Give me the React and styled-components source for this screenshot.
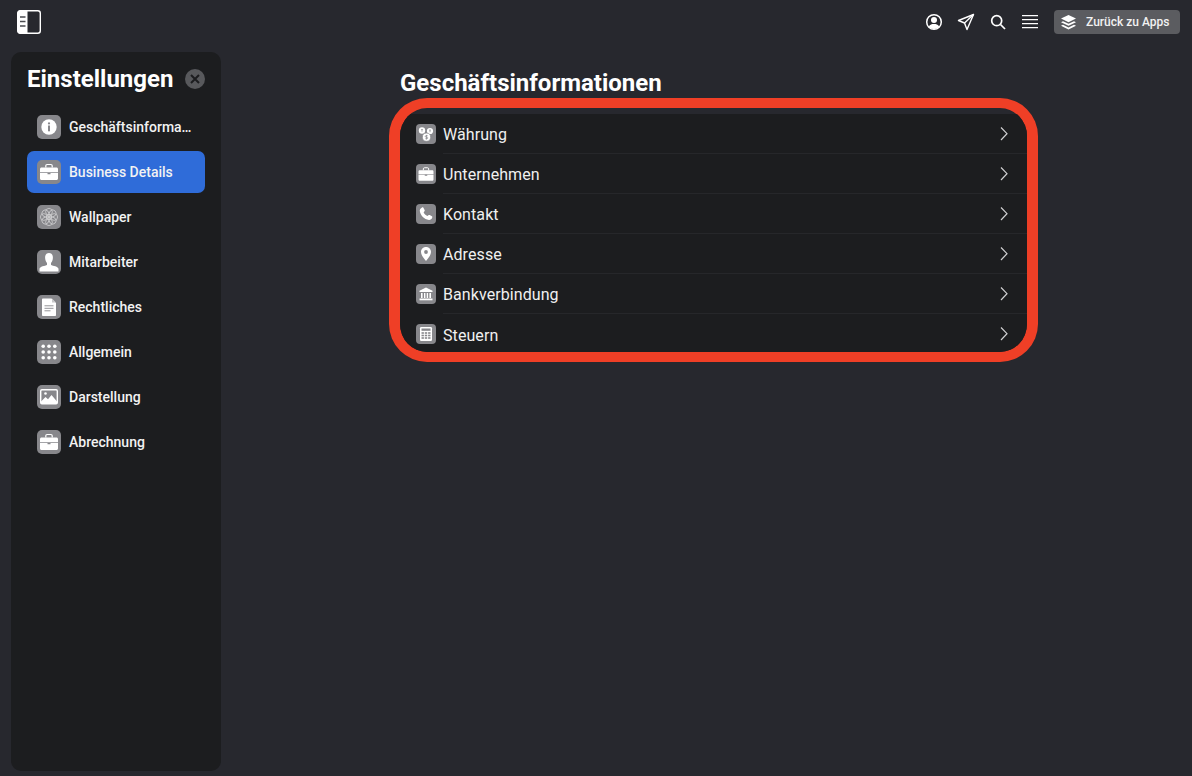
import React from "react";
import styled, { createGlobalStyle } from "styled-components";

const FONT = `Roboto, "Liberation Sans", sans-serif`;

const Global = createGlobalStyle`
  html, body { margin: 0; padding: 0; background: #27282e; }
  body { font-family: ${FONT}; color: #fff; -webkit-font-smoothing: antialiased; }
  * { box-sizing: border-box; }
`;

const Page = styled.div`
  width: 1192px;
  height: 776px;
  overflow: hidden;
  background: #27282e;
  display: flex;
  flex-direction: column;
`;
const TopBar = styled.header`
  height: 44px;
  flex: none;
  margin-bottom: 8px;
  padding: 10px 12px 0 17px;
  display: flex;
  align-items: flex-start;
  justify-content: space-between;
`;
const TopActions = styled.div`
  display: flex;
  align-items: center;
`;
const TopIcon = styled.button`
  width: 32px;
  height: 24px;
  padding: 0;
  border: 0;
  background: none;
  color: #fff;
  display: flex;
  align-items: center;
  justify-content: center;
`;
const BackButton = styled.button`
  width: 126px;
  height: 24px;
  margin-left: 8px;
  padding: 0 0 0 6px;
  border: 0;
  border-radius: 4px;
  background: #5b5c60;
  color: #f2f2f2;
  font: 500 12px/24px ${FONT};
  display: flex;
  align-items: center;
  gap: 9px;
  white-space: nowrap;
`;
const Body = styled.div`
  flex: 1;
  display: flex;
  align-items: flex-start;
  padding-left: 11px;
`;
const Sidebar = styled.aside`
  width: 210px;
  height: 719px;
  flex: none;
  border-radius: 10px;
  background: #1c1d1f;
  padding: 14px 16px 0;
`;
const SideHead = styled.div`
  height: 25px;
  display: flex;
  align-items: center;
  justify-content: space-between;
  margin-bottom: 15px;
`;
const SideTitle = styled.h2`
  margin: 0;
  padding-top: 2px;
  font: 700 24px/25px ${FONT};
  color: #fff;
`;
const CloseBtn = styled.button`
  width: 20px;
  height: 20px;
  padding: 0;
  border: 0;
  border-radius: 50%;
  background: #58595c;
  display: flex;
  align-items: center;
  justify-content: center;
`;
const Nav = styled.nav`
  display: flex;
  flex-direction: column;
  gap: 3px;
`;
const NavItem = styled.a`
  height: 42px;
  border-radius: 7px;
  padding: 0 10px;
  display: flex;
  align-items: center;
  gap: 8px;
  background: ${(p) => (p.$active ? "#2f6cd9" : "transparent")};
  font: 500 14px/20px ${FONT};
  color: #f2f2f2;
`;
const NavLabel = styled.span`
  white-space: nowrap;
  min-width: 0;
  flex: 1;
`;
const Tile = styled.span`
  width: ${(p) => p.$size}px;
  height: ${(p) => p.$size}px;
  flex: none;
  border-radius: ${(p) => (p.$size > 20 ? 5 : 4)}px;
  background: #87878b;
  display: flex;
  align-items: center;
  justify-content: center;
  & svg { width: 100%; height: 100%; display: block; }
`;
const Main = styled.main`
  margin-left: 168px;
  width: 649px;
`;
const Title = styled.h1`
  margin: 16px 0 0 11px;
  font: 700 24px/30px ${FONT};
  color: #fff;
`;
const Ring = styled.div`
  height: 264px;
  border-style: solid;
  border-color: #ef3f26;
  border-width: 10px 11px;
  border-radius: 38px;
  padding-top: 6px;
  overflow: hidden;
`;
const List = styled.ul`
  margin: 0;
  padding: 0;
  list-style: none;
  background: #1c1d1f;
  height: 238px;
`;
const Row = styled.li`
  height: 40px;
  padding-left: 16px;
  display: flex;
  align-items: center;
  gap: 7px;
`;
const RowBody = styled.div`
  flex: 1;
  height: 100%;
  display: flex;
  align-items: center;
  justify-content: space-between;
  padding-right: 19px;
  border-bottom: ${(p) => (p.$last ? "0" : "1px solid #26272a")};
  font: 400 16px/20px ${FONT};
  letter-spacing: 0.08px;
  color: #f0f0f0;
`;
const RowLabel = styled.span`
  padding-top: ${(p) => (p.$last ? 4 : 2)}px;
`;

const W = "#fff";
const G = "#87878b";

const InfoIcon = () => (
  <svg viewBox="0 0 24 24">
    <circle cx="12" cy="12" r="7.700" fill={W} />
    <circle cx="12" cy="8.400" r="1.100" fill={G} />
    <rect x="11" y="10.500" width="2" height="5.800" fill={G} />
  </svg>
);
const CaseIcon = () => (
  <svg viewBox="0 0 24 24">
    <path d="M8.800 7.500V5.800c0-.8.600-1.300 1.300-1.300h3.800c.7 0 1.300.5 1.300 1.300v1.700" fill="none" stroke={W} strokeWidth="1.200" />
    <path d="M4.500 7.500h15c.8 0 1.500.7 1.500 1.500v3.200H3V9c0-.8.700-1.500 1.500-1.500z" fill={W} />
    <path d="M3 13h7.500v1.200h3V13H21v5.500c0 .8-.7 1.500-1.500 1.500h-15C3.700 20 3 19.300 3 18.500z" fill={W} />
  </svg>
);
const FlowerIcon = () => (
  <svg viewBox="0 0 24 24" fill="none" stroke="#cfcfd1" strokeWidth=".8">
    {[0, 45, 90, 135, 180, 225, 270, 315].map((a) => (
      <circle key={a} cx="12" cy="6.800" r="3.400" transform={`rotate(${a} 12 12)`} />
    ))}
    <circle cx="12" cy="12" r="2.600" />
    <circle cx="12" cy="12" r="1" fill="#cfcfd1" />
  </svg>
);
const PersonIcon = () => (
  <svg viewBox="0 0 24 24">
    <path d="M12 3c2.500 0 3.900 1.900 3.900 4.400 0 2.400-.9 4.200-1.900 5.500V15c1.800 1 7.500 1.300 7.500 4v2.500h-19V19c0-2.700 5.700-3 7.500-4v-2.100c-1-1.300-1.900-3.100-1.900-5.500C8.100 4.900 9.500 3 12 3z" fill={W} />
  </svg>
);
const DocIcon = () => (
  <svg viewBox="0 0 24 24">
    <path d="M6 3.500h8.500L19 8v12c0 .6-.5 1-1 1H6c-.5 0-1-.4-1-1V4.500c0-.6.500-1 1-1z" fill={W} />
    <path d="M15 3.500L19 7.500h-4z" fill="#c8c8ca" />
    <path d="M7.500 10.800h9M7.500 13.300h9M7.500 15.800h6" stroke={G} strokeWidth=".9" />
  </svg>
);
const DotsIcon = () => (
  <svg viewBox="0 0 24 24" fill={W}>
    {[6.200, 12, 17.800].flatMap((y) =>
      [6.200, 12, 17.800].map((x) => <circle key={`${x}-${y}`} cx={x} cy={y} r="1.800" />)
    )}
  </svg>
);
const PictureIcon = () => (
  <svg viewBox="0 0 24 24">
    <rect x="3.700" y="4.700" width="16.600" height="14" rx="1.200" fill="none" stroke={W} strokeWidth="1.400" />
    <path d="M4 18.500v-2l4.500-4.500 2.500 2.300 3.500-4.300 5.500 6.500v2z" fill={W} />
    <circle cx="8.500" cy="8.500" r="1.300" fill={W} />
  </svg>
);
const CoinsIcon = () => (
  <svg viewBox="0 0 20 20">
    <circle cx="6" cy="6.500" r="3.200" fill={W} />
    <circle cx="14" cy="7" r="3.100" fill={W} />
    <circle cx="10.500" cy="13.200" r="4.100" fill={W} stroke={G} strokeWidth=".7" />
    <path d="M11.700 11.700h-1.800c-.9 0-.9 1.500 0 1.500h1.200c.9 0 .9 1.500 0 1.500H9.300M10.500 10.900v4.600" fill="none" stroke={G} strokeWidth=".7" />
    <path d="M5.200 5.500h1.600M6 5.500v2.200M13.200 6h1.600M14 6v2.200" stroke={G} strokeWidth=".7" />
  </svg>
);
const PhoneIcon = () => (
  <svg viewBox="0 0 20 20">
    <path d="M6 3.500c.6-.3 1.100-.2 1.400.3l1.200 2.200c.3.5.2.9-.1 1.300l-.9 1c.7 1.700 2 3 3.800 3.800l1-.9c.4-.3.800-.4 1.300-.1l2.200 1.200c.5.300.6.800.3 1.400-.6 1.400-1.900 2.400-3.300 2.200C8.100 15.400 4.600 11.900 3.800 7.100 3.600 5.500 4.600 4.200 6 3.500z" fill={W} />
  </svg>
);
const PinIcon = () => (
  <svg viewBox="0 0 20 20">
    <path d="M10 3c3 0 5 2.200 5 5 0 3.300-3.200 6.500-5 9-1.800-2.500-5-5.700-5-9 0-2.800 2-5 5-5z" fill={W} />
    <circle cx="10" cy="8" r="1.900" fill={G} />
  </svg>
);
const BankIcon = () => (
  <svg viewBox="0 0 20 20">
    <path d="M10 3.500l6.500 3.200v1.300h-13V6.700z" fill={W} />
    <path d="M5 9h1.600v5H5zM8 9h1.400v5H8zM10.700 9h1.400v5h-1.400zM13.400 9H15v5h-1.600z" fill={W} />
    <rect x="3.500" y="14.500" width="13" height="1.800" fill={W} />
  </svg>
);
const CalcIcon = () => (
  <svg viewBox="0 0 20 20">
    <rect x="4" y="3" width="12" height="14" rx="1.200" fill={W} />
    <rect x="5.500" y="4.500" width="9" height="2.300" fill={G} />
    {[8.200, 10.700, 13.200].flatMap((y) =>
      [5.500, 8.800, 12.100].map((x) => <rect key={`${x}-${y}`} x={x} y={y} width="2.400" height="1.600" fill={G} />)
    )}
  </svg>
);
const Chevron = () => (
  <svg width="8" height="14" viewBox="0 0 8 14" fill="none" stroke="#d0d0d2" strokeWidth="1.200">
    <path d="M1 .5L7 6.700 1 13" />
  </svg>
);

const navItems = [
  { label: "Geschäftsinforma…", Icon: InfoIcon },
  { label: "Business Details", Icon: CaseIcon, active: true },
  { label: "Wallpaper", Icon: FlowerIcon },
  { label: "Mitarbeiter", Icon: PersonIcon },
  { label: "Rechtliches", Icon: DocIcon },
  { label: "Allgemein", Icon: DotsIcon },
  { label: "Darstellung", Icon: PictureIcon },
  { label: "Abrechnung", Icon: CaseIcon },
];
const rows = [
  { label: "Währung", Icon: CoinsIcon },
  { label: "Unternehmen", Icon: CaseIcon },
  { label: "Kontakt", Icon: PhoneIcon },
  { label: "Adresse", Icon: PinIcon },
  { label: "Bankverbindung", Icon: BankIcon },
  { label: "Steuern", Icon: CalcIcon },
];

export default function App() {
  return (
    <Page>
      <Global />
      <TopBar>
        <svg width="24" height="24" viewBox="0 0 24 24">
          <rect x=".7" y=".7" width="22.600" height="22.600" rx="2.500" fill="none" stroke="#fff" strokeWidth="1.400" />
          <path d="M2.500.6H10.500v22.800H2.500C1.400 23.400.6 22.600.6 21.500v-19C.6 1.400 1.400.6 2.500.6z" fill="#fff" />
          <path d="M3 7h5.500M3 11.500h5.500M3 16h5.500" stroke="#4a4b50" strokeWidth="1.300" />
        </svg>
        <TopActions>
          <TopIcon aria-label="Profil">
            <svg width="18" height="18" viewBox="0 0 18 18">
              <circle cx="9" cy="9" r="7.300" fill="none" stroke="#fff" strokeWidth="1.500" />
              <circle cx="9" cy="7" r="3" fill="#fff" />
              <path d="M3.800 13.500C5 11.500 6.800 11 9 11s4 .5 5.200 2.500C13 15.200 11 16 9 16s-4-.8-5.200-2.500z" fill="#fff" />
            </svg>
          </TopIcon>
          <TopIcon aria-label="Senden">
            <svg width="18" height="18" viewBox="0 0 18 18" fill="none" stroke="#fff" strokeWidth="1.400" strokeLinejoin="round">
              <path d="M16.500 1.500L1.500 7.500l6 2.500 2.500 6.500z" />
              <path d="M16.500 1.500L7.500 10" />
            </svg>
          </TopIcon>
          <TopIcon aria-label="Suche">
            <svg width="16" height="16" viewBox="0 0 16 16" fill="none" stroke="#fff" strokeWidth="1.700">
              <circle cx="6.700" cy="6.700" r="5" />
              <path d="M10.500 10.500L15 15" />
            </svg>
          </TopIcon>
          <TopIcon aria-label="Menü">
            <svg width="16" height="14" viewBox="0 0 16 14" stroke="#fff" strokeWidth="1.300">
              <path d="M0 .7h16M0 4.700h16M0 8.700h16M0 12.700h16" />
            </svg>
          </TopIcon>
          <BackButton>
            <svg width="17" height="17" viewBox="0 0 17 17" fill="#fff">
              <path d="M8.500 1l7.500 3.600-7.500 3.600L1 4.600z" />
              <path d="M3 7.200l5.500 2.600L14 7.200l2 1-7.500 3.600L1 8.200z" />
              <path d="M3 10.800l5.500 2.600 5.500-2.600 2 1-7.500 3.800L1 11.800z" />
            </svg>
            Zurück zu Apps
          </BackButton>
        </TopActions>
      </TopBar>
      <Body>
        <Sidebar>
          <SideHead>
            <SideTitle>Einstellungen</SideTitle>
            <CloseBtn aria-label="Schließen">
              <svg width="10" height="10" viewBox="0 0 10 10" stroke="#1c1d1f" strokeWidth="2">
                <path d="M1 1l8 8M9 1L1 9" />
              </svg>
            </CloseBtn>
          </SideHead>
          <Nav>
            {navItems.map(({ label, Icon, active }) => (
              <NavItem key={label} $active={active}>
                <Tile $size={24}><Icon /></Tile>
                <NavLabel>{label}</NavLabel>
              </NavItem>
            ))}
          </Nav>
        </Sidebar>
        <Main>
          <Title>Geschäftsinformationen</Title>
          <Ring>
            <List>
              {rows.map(({ label, Icon }, i) => (
                <Row key={label}>
                  <Tile $size={20}><Icon /></Tile>
                  <RowBody $last={i === rows.length - 1}>
                    <RowLabel $last={i === rows.length - 1}>{label}</RowLabel>
                    <Chevron />
                  </RowBody>
                </Row>
              ))}
            </List>
          </Ring>
        </Main>
      </Body>
    </Page>
  );
}
